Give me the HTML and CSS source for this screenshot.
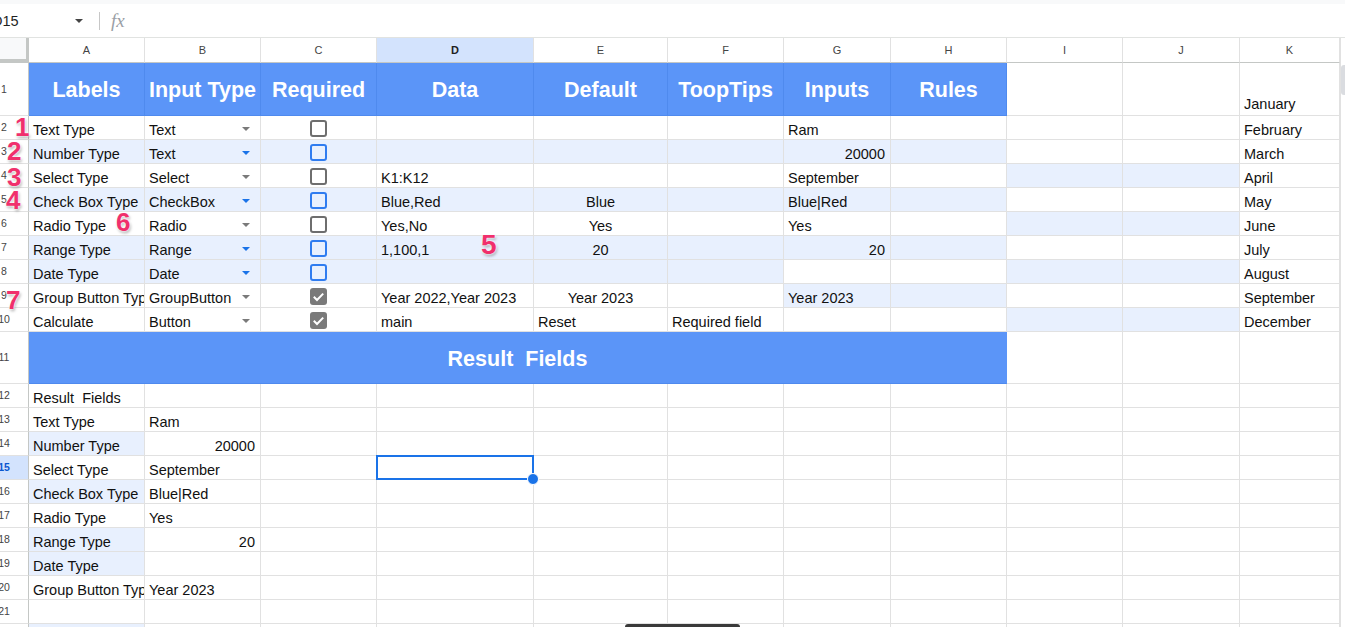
FILE: index.html
```html
<!DOCTYPE html>
<html>
<head>
<meta charset="utf-8">
<title>Sheet</title>
<link rel="stylesheet" href="styles.css">
</head>
<body>
<div class="top"></div>
<div class="fbar">
  <div class="namebox"><span class="nb-text">D15</span><i class="tri"></i></div>
  <div class="sep"></div>
  <div class="fx">fx</div>
</div>
<div class="sheet">
  <div class="grid">
    <div class="r hdr"><div class="corner"></div><div>A</div><div>B</div><div>C</div><div class="on">D</div><div>E</div><div>F</div><div>G</div><div>H</div><div>I</div><div>J</div><div>K</div></div>

    <div class="r tall"><div class="rh"><span>1</span></div><div class="hc">Labels</div><div class="hc">Input Type</div><div class="hc">Required</div><div class="hc">Data</div><div class="hc">Default</div><div class="hc">ToopTips</div><div class="hc">Inputs</div><div class="hc">Rules</div><div></div><div></div><div class="bot">January</div></div>

    <div class="r"><div class="rh"><span>2</span></div><div>Text Type</div><div class="dd"><span>Text</span><i class="arr"></i></div><div class="ck"><i class="cb"></i></div><div></div><div></div><div></div><div>Ram</div><div></div><div></div><div></div><div>February</div></div>

    <div class="r"><div class="rh"><span>3</span></div><div class="b">Number Type</div><div class="b dd"><span>Text</span><i class="arr blue"></i></div><div class="b ck"><i class="cb blue"></i></div><div class="b"></div><div class="b"></div><div class="b"></div><div class="b rt">20000</div><div class="b"></div><div></div><div></div><div>March</div></div>

    <div class="r"><div class="rh"><span>4</span></div><div>Select Type</div><div class="dd"><span>Select</span><i class="arr"></i></div><div class="ck"><i class="cb"></i></div><div>K1:K12</div><div></div><div></div><div>September</div><div></div><div class="b"></div><div class="b"></div><div>April</div></div>

    <div class="r"><div class="rh"><span>5</span></div><div class="b">Check Box Type</div><div class="b dd"><span>CheckBox</span><i class="arr blue"></i></div><div class="b ck"><i class="cb blue"></i></div><div class="b">Blue,Red</div><div class="b ct">Blue</div><div class="b"></div><div class="b">Blue|Red</div><div class="b"></div><div></div><div></div><div>May</div></div>

    <div class="r"><div class="rh"><span>6</span></div><div>Radio Type</div><div class="dd"><span>Radio</span><i class="arr"></i></div><div class="ck"><i class="cb"></i></div><div>Yes,No</div><div class="ct">Yes</div><div></div><div>Yes</div><div></div><div class="b"></div><div class="b"></div><div>June</div></div>

    <div class="r"><div class="rh"><span>7</span></div><div class="b">Range Type</div><div class="b dd"><span>Range</span><i class="arr blue"></i></div><div class="b ck"><i class="cb blue"></i></div><div class="b">1,100,1</div><div class="b ct">20</div><div class="b"></div><div class="b rt">20</div><div class="b"></div><div></div><div></div><div>July</div></div>

    <div class="r"><div class="rh"><span>8</span></div><div class="b">Date Type</div><div class="b dd"><span>Date</span><i class="arr blue"></i></div><div class="b ck"><i class="cb blue"></i></div><div class="b"></div><div class="b"></div><div class="b"></div><div></div><div></div><div class="b"></div><div class="b"></div><div>August</div></div>

    <div class="r"><div class="rh"><span>9</span></div><div>Group Button Type</div><div class="dd"><span>GroupButton</span><i class="arr"></i></div><div class="ck"><i class="cb checked"><svg viewBox="0 0 17 17" width="17" height="17"><path d="M3.8 8.8 L7 12 L13.2 5.6" fill="none" stroke="#fff" stroke-width="2"/></svg></i></div><div>Year 2022,Year 2023</div><div class="ct">Year 2023</div><div></div><div class="b">Year 2023</div><div class="b"></div><div></div><div></div><div>September</div></div>

    <div class="r"><div class="rh"><span>10</span></div><div>Calculate</div><div class="dd"><span>Button</span><i class="arr"></i></div><div class="ck"><i class="cb checked"><svg viewBox="0 0 17 17" width="17" height="17"><path d="M3.8 8.8 L7 12 L13.2 5.6" fill="none" stroke="#fff" stroke-width="2"/></svg></i></div><div>main</div><div>Reset</div><div>Required field</div><div></div><div></div><div class="b"></div><div class="b"></div><div>December</div></div>

    <div class="r tall2"><div class="rh"><span>11</span></div><div class="hc merged">Result  Fields</div><div></div><div></div><div></div></div>

    <div class="r"><div class="rh"><span>12</span></div><div>Result  Fields</div><div></div><div></div><div></div><div></div><div></div><div></div><div></div><div></div><div></div><div></div></div>
    <div class="r"><div class="rh"><span>13</span></div><div>Text Type</div><div>Ram</div><div></div><div></div><div></div><div></div><div></div><div></div><div></div><div></div><div></div></div>
    <div class="r"><div class="rh"><span>14</span></div><div class="b">Number Type</div><div class="rt">20000</div><div></div><div></div><div></div><div></div><div></div><div></div><div></div><div></div><div></div></div>
    <div class="r"><div class="rh sel-h"><span>15</span></div><div>Select Type</div><div>September</div><div></div><div class="sel"></div><div></div><div></div><div></div><div></div><div></div><div></div><div></div></div>
    <div class="r"><div class="rh"><span>16</span></div><div class="b">Check Box Type</div><div>Blue|Red</div><div></div><div></div><div></div><div></div><div></div><div></div><div></div><div></div><div></div></div>
    <div class="r"><div class="rh"><span>17</span></div><div>Radio Type</div><div>Yes</div><div></div><div></div><div></div><div></div><div></div><div></div><div></div><div></div><div></div></div>
    <div class="r"><div class="rh"><span>18</span></div><div class="b">Range Type</div><div class="rt">20</div><div></div><div></div><div></div><div></div><div></div><div></div><div></div><div></div><div></div></div>
    <div class="r"><div class="rh"><span>19</span></div><div class="b">Date Type</div><div></div><div></div><div></div><div></div><div></div><div></div><div></div><div></div><div></div><div></div></div>
    <div class="r"><div class="rh"><span>20</span></div><div>Group Button Type</div><div>Year 2023</div><div></div><div></div><div></div><div></div><div></div><div></div><div></div><div></div><div></div></div>
    <div class="r"><div class="rh"><span>21</span></div><div></div><div></div><div></div><div></div><div></div><div></div><div></div><div></div><div></div><div></div><div></div></div>
    <div class="r"><div class="rh"><span>22</span></div><div class="b"></div><div></div><div></div><div></div><div></div><div></div><div></div><div></div><div></div><div></div><div></div></div>

    <span class="ann a1">1</span>
    <span class="ann a2">2</span>
    <span class="ann a3">3</span>
    <span class="ann a4">4</span>
    <span class="ann a5">5</span>
    <span class="ann a6">6</span>
    <span class="ann a7">7</span>
  </div>
  <div class="vs"><div class="thumb"></div></div>
</div>
<div class="homebar"></div>
</body>
</html>
```

FILE: styles.css
```css
* { box-sizing: border-box; }
html, body { margin: 0; height: 100%; overflow: hidden; background: #fff; }
body { font-family: "Liberation Sans", Arial, sans-serif; color: #1f1f1f; position: relative; }

.top { height: 4px; background: #f8f9fa; }
.fbar { height: 34px; display: flex; align-items: center; border-bottom: 1px solid #e1e3e1; }
.namebox { width: 99px; display: flex; align-items: center; }
.nb-text { font-size: 14.5px; margin-left: -8px; color: #1f1f1f; }
.tri { margin-left: auto; margin-right: 16px; width: 0; height: 0; border-left: 4px solid transparent; border-right: 4px solid transparent; border-top: 4px solid #444; }
.sep { width: 1px; height: 18px; background: #c7c7c7; }
.fx { margin-left: 11px; font-family: "Liberation Serif", serif; font-style: italic; font-size: 19px; color: #9aa0a6; }

.sheet { display: flex; }
.grid { width: 1340px; position: relative; }
.vs { width: 5px; border-left: 1px solid #e1e1e1; padding-top: 27px; }
.thumb { height: 30px; background: #dadce0; border-radius: 3px 0 0 3px; }

.r {
  display: grid;
  grid-template-columns: 29px 116px 116px 116px 157px 134px 116px 107px 116px 116px 117px 100px;
  height: 24px;
}
.r > div {
  border-right: 1px solid #e1e1e1;
  border-bottom: 1px solid #e1e1e1;
  padding: 3px 4px 0 4px;
  line-height: 23px;
  font-size: 14.5px;
  white-space: pre;
  overflow: hidden;
  min-width: 0;
  color: #111;
}
.r.tall { height: 53px; }
.r.tall2 { height: 52px; }

/* column header row */
.r.hdr { height: 25px; }
.r.hdr > div {
  padding: 0;
  text-align: center;
  font-size: 11px;
  line-height: 24px;
  color: #444;
  border-bottom-color: #c4c7c5;
  border-right-color: #e1e1e1;
}
.r.hdr > div.on { background: #d3e3fd; font-weight: bold; color: #1f1f1f; }
.r.hdr > div.corner { background: #f8f9fa; border-right: 3px solid #c4c7c5; border-bottom: 4px solid #c4c7c5; }

/* row header */
.r > div.rh {
  padding: 0;
  display: flex;
  align-items: center;
  font-size: 10.5px;
  color: #444;
  border-right-color: #c4c7c5;
}
.rh span { flex: 0 0 40px; margin-left: -16px; text-align: center; }
.r > div.rh.sel-h { background: #d3e3fd; color: #0b57d0; font-weight: bold; }

/* blue header cells */
.r > div.hc {
  background: #5b95f8;
  color: #fff;
  font-weight: bold;
  font-size: 21.5px;
  display: flex;
  align-items: center;
  justify-content: center;
  padding: 3px 0 0 0;
  border-right-color: #4f8aee;
  border-bottom-color: #4f8aee;
}
.r > div.merged { grid-column: span 8; border-right-color: #5b95f8; }

.r > div.bot { display: flex; align-items: flex-end; line-height: 20px; padding-bottom: 1px; }

.r > div.b { background: #e8f0fe; }
.r > div.rt { text-align: right; padding-right: 5px; }
.r > div.ct { text-align: center; }

/* dropdown chips */
.r > div.dd { display: flex; justify-content: space-between; padding-right: 10px; }
.arr { align-self: center; width: 0; height: 0; border-left: 4px solid transparent; border-right: 4px solid transparent; border-top: 4px solid #7a7a7a; }
.arr.blue { border-top-color: #1a73e8; }

/* checkboxes */
.r > div.ck { display: flex; justify-content: center; align-items: center; padding-top: 2px; }
.cb { display: block; width: 17px; height: 17px; border: 2px solid #6e6e6e; border-radius: 3px; }
.cb.blue { border-color: #2f7cf0; }
.cb.checked { border: none; background: #7a7a7a; }
.cb svg { display: block; }

/* selected cell */
.r > div.sel { position: relative; overflow: visible; }
.sel::before { content: ""; position: absolute; left: -1px; top: -1px; right: -1px; bottom: -1px; border: 2px solid #1a73e8; z-index: 2; }
.sel::after { content: ""; position: absolute; right: -6px; bottom: -6px; width: 10px; height: 10px; border-radius: 50%; background: #1a73e8; border: 1px solid #fff; z-index: 3; }

/* pink annotations */
.ann {
  position: absolute;
  font-weight: bold;
  font-size: 26px;
  line-height: 26px;
  color: #f0306c;
  text-shadow: 0 0 2px #fff, 0 0 3px #fff, 1px 2px 3px rgba(0, 0, 0, 0.35);
  z-index: 4;
}
.a1 { left: 15px; top: 76px; }
.a2 { left: 7px; top: 100px; }
.a3 { left: 7px; top: 126px; }
.a4 { left: 6px; top: 149px; }
.a5 { left: 481px; top: 194px; font-size: 28px; }
.a6 { left: 116px; top: 171px; }
.a7 { left: 6px; top: 249px; }

.homebar { position: absolute; left: 625px; bottom: 0; width: 115px; height: 3px; background: #3a3a3a; border-radius: 3px 3px 0 0; }
```
